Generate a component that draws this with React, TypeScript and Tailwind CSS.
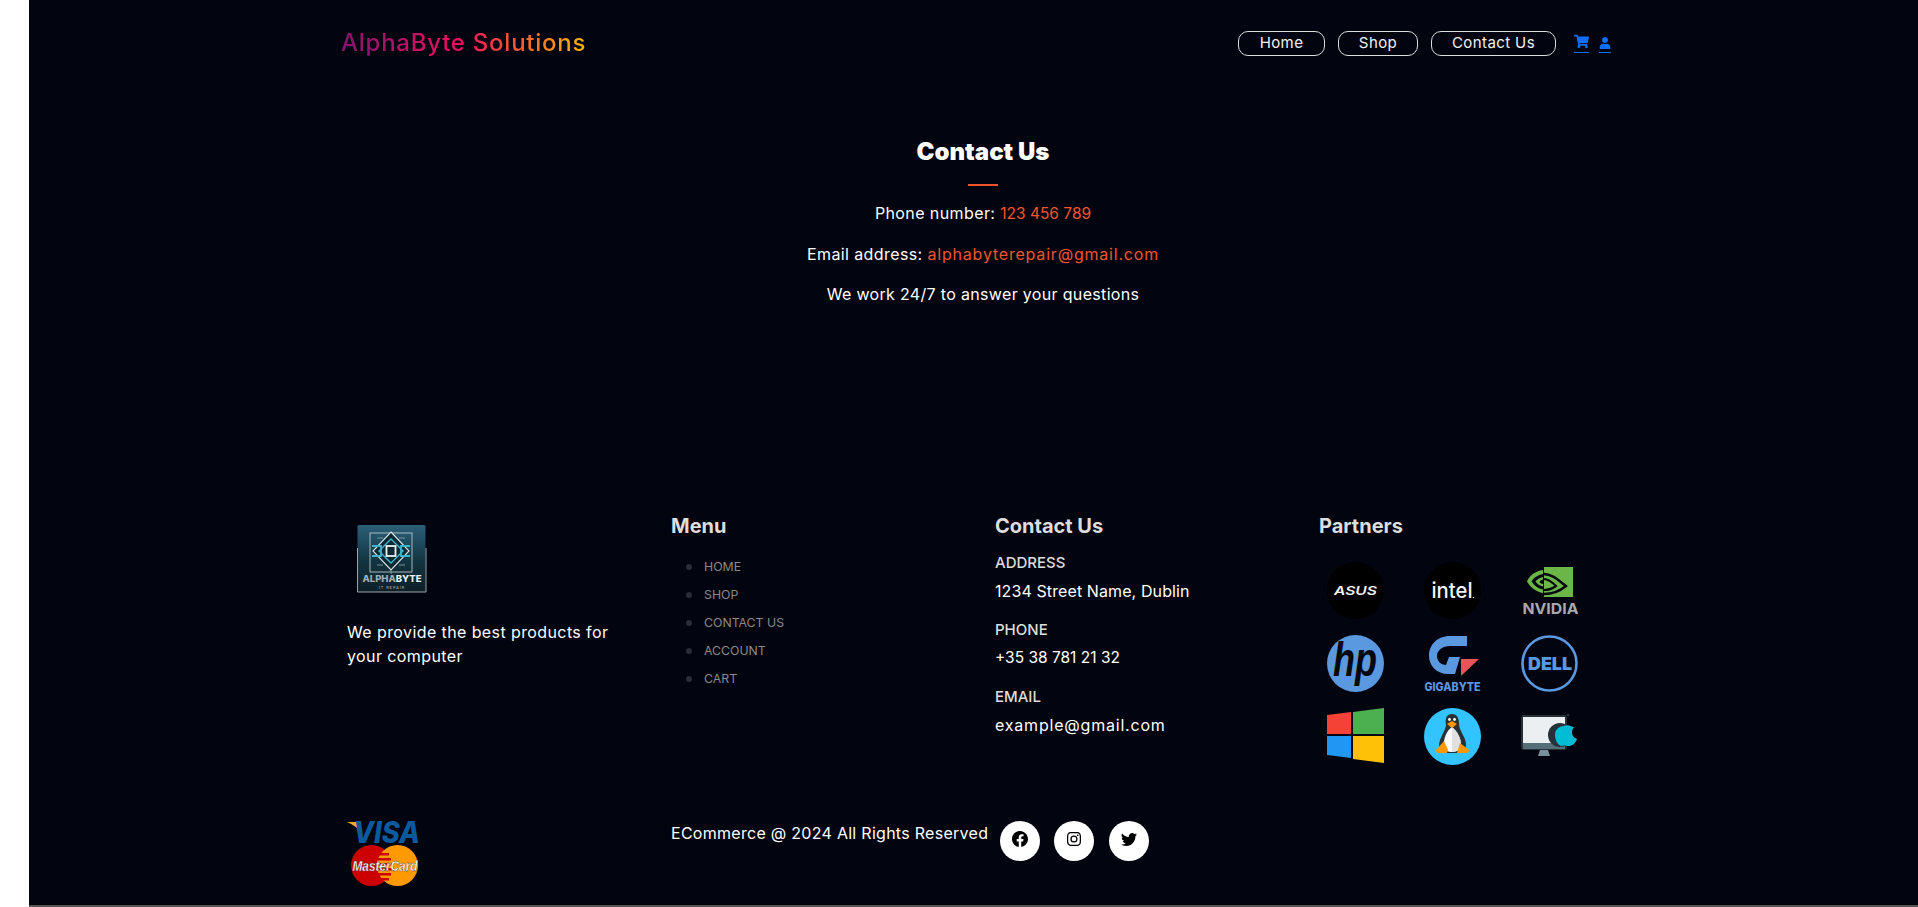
import { BsFacebook, BsInstagram, BsTwitter } from "react-icons/bs";
import { FaShoppingCart, FaUser } from "react-icons/fa";

const font = { fontFamily: "Inter, 'Open Sans', sans-serif" };

const AlphaLogo = () => (
  <svg width="70" height="70" viewBox="0 0 70 70">
    <defs>
      <linearGradient id="alphaBg" x1="0" y1="0" x2="0" y2="1">
        <stop offset="0" stopColor="#2c5f78" />
        <stop offset="0.55" stopColor="#123440" />
        <stop offset="1" stopColor="#0f1f28" />
      </linearGradient>
    </defs>
    <rect x="0.5" y="1" width="68" height="67" rx="1.5" fill="url(#alphaBg)" />
    <path d="M0.5 24 V68 H69 V24" fill="none" stroke="#a9b6b8" strokeWidth="0.9" />
    <rect x="13" y="9" width="42" height="39" fill="none" stroke="#b9c5c7" strokeWidth="0.9" />
    <path d="M34 8 L52 27 L34 46 L16 27 Z" fill="#0f2933" stroke="#dbe5e6" strokeWidth="1.1" />
    <path d="M15 22 H24 V32 H15 M53 22 H44 V32 H53" fill="none" stroke="#3fb4ce" strokeWidth="1.8" />
    <path d="M34 15 L46 27 L34 39 L22 27 Z" fill="none" stroke="#3fb4ce" strokeWidth="1.4" />
    <rect x="29.5" y="22" width="9" height="10" fill="#0f2933" stroke="#eef3f3" strokeWidth="1.8" />
    <path d="M20 14 H26 M42 14 H48 M20 41 H26 M42 41 H48 M34 46 V50" stroke="#8fa5aa" strokeWidth="0.8" />
    <text x="35" y="58" textAnchor="middle" fontSize="9.5" fontWeight="800" fontFamily="Inter, sans-serif">
      <tspan fill="#9fb0b2">ALPHA</tspan>
      <tspan fill="#eef2f2">BYTE</tspan>
    </text>
    <text x="35" y="65" textAnchor="middle" fontSize="3.8" fontWeight="600" fill="#8f9b9c" fontFamily="Inter, sans-serif" letterSpacing="1">
      IT REPAIR
    </text>
  </svg>
);

const AsusLogo = () => (
  <svg viewBox="0 0 57 57" className="size-[57px]">
    <circle cx="28.5" cy="28.5" r="28.5" fill="#000" />
    <text x="28.5" y="33" textAnchor="middle" fontSize="12" fontStyle="italic" fontWeight="600" fill="#f4f4f4" fontFamily="Inter, sans-serif" textLength="43" lengthAdjust="spacingAndGlyphs">
      ASUS
    </text>
  </svg>
);

const IntelLogo = () => (
  <svg viewBox="0 0 57 57" className="size-[57px]">
    <circle cx="28.5" cy="28.5" r="28.5" fill="#000" />
    <text x="28" y="36" textAnchor="middle" fontSize="21" fontWeight="500" fill="#f4f4f4" fontFamily="Inter, sans-serif" textLength="41" lengthAdjust="spacingAndGlyphs">
      intel
    </text>
    <circle cx="49.5" cy="35.5" r="0.8" fill="#ddd" />
  </svg>
);

const NvidiaLogo = () => (
  <svg viewBox="0 0 57 57" className="size-[57px]">
    <rect x="23" y="5" width="29" height="30" fill="#6cb648" />
    <path d="M22 8 C14 9 8 14 6 19.5 C9 25 15 30 22 31 Z" fill="#6cb648" />
    <path d="M22 12 C16.5 13 12.5 16 10.5 19.5 C13 23.5 17 26.5 22 27.5 Z" fill="#05070f" />
    <path d="M22 15 C18.5 15.5 16 17.5 14.5 19.5 C16 22 19 24 22 24.5 Z" fill="#6cb648" />
    <path d="M22 17.5 C20 18 19 19 18.5 20 C19.5 21 20.5 22 22 22 Z" fill="#05070f" />
    <path d="M23 12 C31 12 37 18 45 24 C39 29 31 32 23 32" fill="none" stroke="#05070f" strokeWidth="2.4" />
    <path d="M23 17 C28 17 32 21 35 24 C31 27 27 28 23 28" fill="none" stroke="#05070f" strokeWidth="2.2" />
    <text x="29.5" y="52" textAnchor="middle" fontSize="15" fontWeight="700" fill="#a7a9ac" fontFamily="Inter, sans-serif" textLength="56" lengthAdjust="spacingAndGlyphs">
      NVIDIA
    </text>
  </svg>
);

const HpLogo = () => (
  <svg viewBox="0 0 57 57" className="size-[57px]">
    <circle cx="28.5" cy="28.5" r="28.5" fill="#5a98e0" />
    <text x="28" y="41" textAnchor="middle" fontSize="48" fontStyle="italic" fontWeight="700" fill="#05070f" fontFamily="'Liberation Sans', sans-serif" textLength="44" lengthAdjust="spacingAndGlyphs">
      hp
    </text>
  </svg>
);

const GigabyteLogo = () => (
  <svg viewBox="0 0 57 57" className="size-[57px]">
    <path d="M43 1 H26 C13 1 5 10 5 21 C5 31 13 39 24 39 H31 L36 22 H25 L22 30 C17 30 13 26 13 21 C13 15 19 11 26 11 H43 Z" fill="#5a98e0" />
    <path d="M37 24 H55 L37 41 Z" fill="#e8545a" />
    <text x="28.5" y="56" textAnchor="middle" fontSize="11.5" fontWeight="800" fill="#5a98e0" fontFamily="Inter, sans-serif" textLength="56" lengthAdjust="spacingAndGlyphs">
      GIGABYTE
    </text>
  </svg>
);

const DellLogo = () => (
  <svg viewBox="0 0 57 57" className="size-[57px]">
    <circle cx="28.5" cy="28.5" r="27" fill="none" stroke="#5a98e0" strokeWidth="2.6" />
    <text x="29" y="34.5" textAnchor="middle" fontSize="17" fontWeight="900" fill="#5a98e0" fontFamily="Inter, sans-serif" textLength="44" lengthAdjust="spacingAndGlyphs">
      DELL
    </text>
  </svg>
);

const WindowsLogo = () => (
  <svg viewBox="0 0 57 57" className="size-[57px]">
    <path d="M0 7 L24 4 V26 H0 Z" fill="#f44336" />
    <path d="M26 4 L57 0 V26 H26 Z" fill="#4caf50" />
    <path d="M0 28 H24 V50 L0 47 Z" fill="#2196f3" />
    <path d="M26 28 H57 V55 L26 51 Z" fill="#ffc107" />
  </svg>
);

const LinuxLogo = () => (
  <svg viewBox="0 0 57 57" className="size-[57px]">
    <circle cx="28.5" cy="28.5" r="28.5" fill="#33c3ff" />
    <path d="M28 6 C22 6 21 11 22 17 C22 22 15 30 15 38 C15 42 18 44 21 45 H36 C40 44 42 41 42 36 C42 29 35 23 35 16 C35 10 33 6 28 6 Z" fill="#263238" />
    <path d="M28 19 C23 22 19 31 20 38 C21 43 24 44 28 44 C33 44 36 42 37 37 C37 30 33 23 28 19 Z" fill="#fafafa" />
    <path d="M28 19 C33 23 37 30 37 37 C36 42 33 44 28 44 Z" fill="#e0e0e0" />
    <path d="M23 16 L28 13 L33 16 L28 20 Z" fill="#ff9800" />
    <circle cx="25.5" cy="11.5" r="1.4" fill="#fff" />
    <circle cx="30.5" cy="11.5" r="1.4" fill="#fff" />
    <path d="M12 42 L20 33 L24 42 L23 45 H13 Z" fill="#ff9800" />
    <path d="M33 45 L36 35 L45 42 L44 45 Z" fill="#ff9800" />
  </svg>
);

const MacLogo = () => (
  <svg viewBox="0 0 57 57" className="size-[57px]">
    <rect x="0" y="7" width="46" height="35" rx="3" fill="#263238" />
    <rect x="2" y="9" width="42" height="26" fill="#eceff1" />
    <rect x="2" y="35" width="42" height="6" fill="#546e7a" />
    <path d="M19 42 H27 L29 48 H17 Z" fill="#78909c" />
    <circle cx="39" cy="27" r="12" fill="#263238" />
    <path d="M43 18 C47 16 50 19 53 19 C50 23 50 29 56 31 C54 36 51 38 48 38 C45 38 43 37 41 38 C37 38 34 32 34 27 C34 21 39 18 43 18 Z" fill="#00bcd4" />
    <circle cx="47" cy="7" r="1.5" fill="#263238" />
  </svg>
);

const stripes = [
  [33, 42],
  [31, 44],
  [30, 45],
  [30, 45],
  [31, 44],
  [33, 42],
];

const PaymentLogo = () => (
  <svg width="74" height="66" viewBox="0 0 74 66">
    <path d="M0 1 H9 Q13 1 14 6 L15 13 Q10 5 0 1 Z" fill="#f7a823" />
    <text x="39.5" y="22" textAnchor="middle" fontSize="30" fontStyle="italic" fontWeight="800" fill="#0b5a9e" fontFamily="Inter, sans-serif" textLength="67" lengthAdjust="spacingAndGlyphs">
      VISA
    </text>
    <circle cx="24.5" cy="44.5" r="20.5" fill="#cc0000" />
    <circle cx="50.5" cy="44.5" r="20.5" fill="#ff9900" />
    {stripes.map(([x1, x2], i) => (
      <rect key={i} x={x1} y={32 + i * 5} width={x2 - x1} height="2.5" fill="#cc0000" />
    ))}
    <text x="38" y="50" textAnchor="middle" fontSize="14.5" fontStyle="italic" fontWeight="700" fill="#fff" fontFamily="'Liberation Sans', sans-serif" textLength="65" lengthAdjust="spacingAndGlyphs" stroke="#222" strokeWidth="0.3">
      MasterCard
    </text>
  </svg>
);

const partners = [AsusLogo, IntelLogo, NvidiaLogo, HpLogo, GigabyteLogo, DellLogo, WindowsLogo, LinuxLogo, MacLogo];
const menu = ["HOME", "SHOP", "CONTACT US", "ACCOUNT", "CART"];

export default function App() {
  return (
    <div style={font} className="flex h-[907px] bg-white overflow-hidden">
      <div className="ml-[29px] flex-1 pl-[19px] bg-[#02040f] border-b-2 border-[#555] text-white">
        <div className="w-[1296px] mx-auto">
          <header className="h-[86px] flex items-center justify-between pl-[6px] pr-[20px]">
            <a className="text-[24px] font-medium tracking-[0.75px] bg-[linear-gradient(90deg,#80146e_0%,#f0115f_50%,#ffb800_100%)] bg-clip-text text-transparent">
              AlphaByte Solutions
            </a>
            <nav className="flex items-center gap-[13px] text-[15px] tracking-[0.4px] text-[#f2f2f2]">
              <a className="w-[87px] h-[25px] flex items-center justify-center border border-[#ddd] rounded-[10px]">Home</a>
              <a className="w-[80px] h-[25px] flex items-center justify-center border border-[#ddd] rounded-[10px]">Shop</a>
              <a className="w-[125px] h-[25px] flex items-center justify-center border border-[#ddd] rounded-[10px]">Contact Us</a>
              <a className="ml-[5px] pb-[3px] border-b border-[#0d6efd] text-[#0d6efd]"><FaShoppingCart className="size-[15px]" /></a>
              <a className="pb-[3px] border-b border-[#0d6efd] text-[#0d6efd] -ml-[3px]"><FaUser className="size-[12px] mt-[3px]" /></a>
            </nav>
          </header>

          <section className="mt-[48px] flex flex-col items-center text-[16px]">
            <h2 className="text-[24px] leading-9 font-black">Contact Us</h2>
            <div className="mt-[14px] mb-[15px] w-[30px] h-[2px] bg-[#f0552f]"></div>
            <p className="leading-6 mb-4 tracking-[0.4px]">Phone number: <span className="text-[15.5px] tracking-normal text-[#f0552f]">123 456 789</span></p>
            <p className="leading-6 mb-4 tracking-[0.4px]">Email address: <span className="tracking-[0.8px] text-[#f0552f]">alphabyterepair@gmail.com</span></p>
            <p className="leading-6 mb-4 tracking-[0.33px]">We work 24/7 to answer your questions</p>
          </section>

          <footer className="mt-[189px]">
            <div className="grid grid-cols-4">
              <div className="px-3 pt-[13px]">
                <div className="ml-[10px]"><AlphaLogo /></div>
                <p className="mt-[26px] w-[270px] text-[16px] tracking-[0.4px] leading-6">We provide the best products for your computer</p>
              </div>
              <div className="px-3">
                <h3 className="text-[20px] leading-[30px] font-bold text-[#ddd]">Menu</h3>
                <ul className="mt-[12px] ml-[15px]">
                  {menu.map((item) => (
                    <li key={item} className="h-[28px] flex items-center gap-[12px] text-[12.3px] text-[#8a8a8a]">
                      <span className="size-[6px] rounded-full bg-[#2b2d36]"></span>
                      {item}
                    </li>
                  ))}
                </ul>
              </div>
              <div className="px-3">
                <h3 className="text-[20px] leading-[30px] font-bold text-[#ddd]">Contact Us</h3>
                <div className="mt-[8px] flex flex-col gap-[11px]">
                  <div>
                    <div className="text-[15px] leading-[28px] font-medium text-[#ddd]">ADDRESS</div>
                    <div className="text-[16px] tracking-[0.1px] leading-[28px]">1234 Street Name, Dublin</div>
                  </div>
                  <div>
                    <div className="text-[15px] leading-[28px] font-medium text-[#ddd]">PHONE</div>
                    <div className="text-[15.5px] leading-[28px]">+35 38 781 21 32</div>
                  </div>
                  <div>
                    <div className="text-[15px] leading-[28px] font-medium text-[#ddd]">EMAIL</div>
                    <div className="text-[16px] tracking-[0.8px] leading-[28px]">example@gmail.com</div>
                  </div>
                </div>
              </div>
              <div className="px-3">
                <h3 className="text-[20px] leading-[30px] font-bold text-[#ddd]">Partners</h3>
                <div className="mt-[21px] ml-2 grid grid-cols-[57px_57px_57px] gap-x-10 gap-y-4">
                  {partners.map((Logo, i) => (
                    <Logo key={i} />
                  ))}
                </div>
              </div>
            </div>

            <div className="mt-[56px] grid grid-cols-4">
              <div className="px-3"><PaymentLogo /></div>
              <div className="col-span-2 px-3 flex items-start">
                <p className="w-[317px] text-[16px] tracking-[0.28px] leading-6 whitespace-nowrap">ECommerce @ 2024 All Rights Reserved</p>
                <div className="ml-[12px] flex gap-[14px] text-black">
                  <a className="size-10 rounded-full bg-white flex items-center justify-center pb-1"><BsFacebook className="size-4" /></a>
                  <a className="size-10 rounded-full bg-white flex items-center justify-center pb-1"><BsInstagram className="size-[14px]" /></a>
                  <a className="ml-px size-10 rounded-full bg-white flex items-center justify-center pb-1"><BsTwitter className="size-4" /></a>
                </div>
              </div>
            </div>
          </footer>
        </div>
      </div>
    </div>
  );
}
